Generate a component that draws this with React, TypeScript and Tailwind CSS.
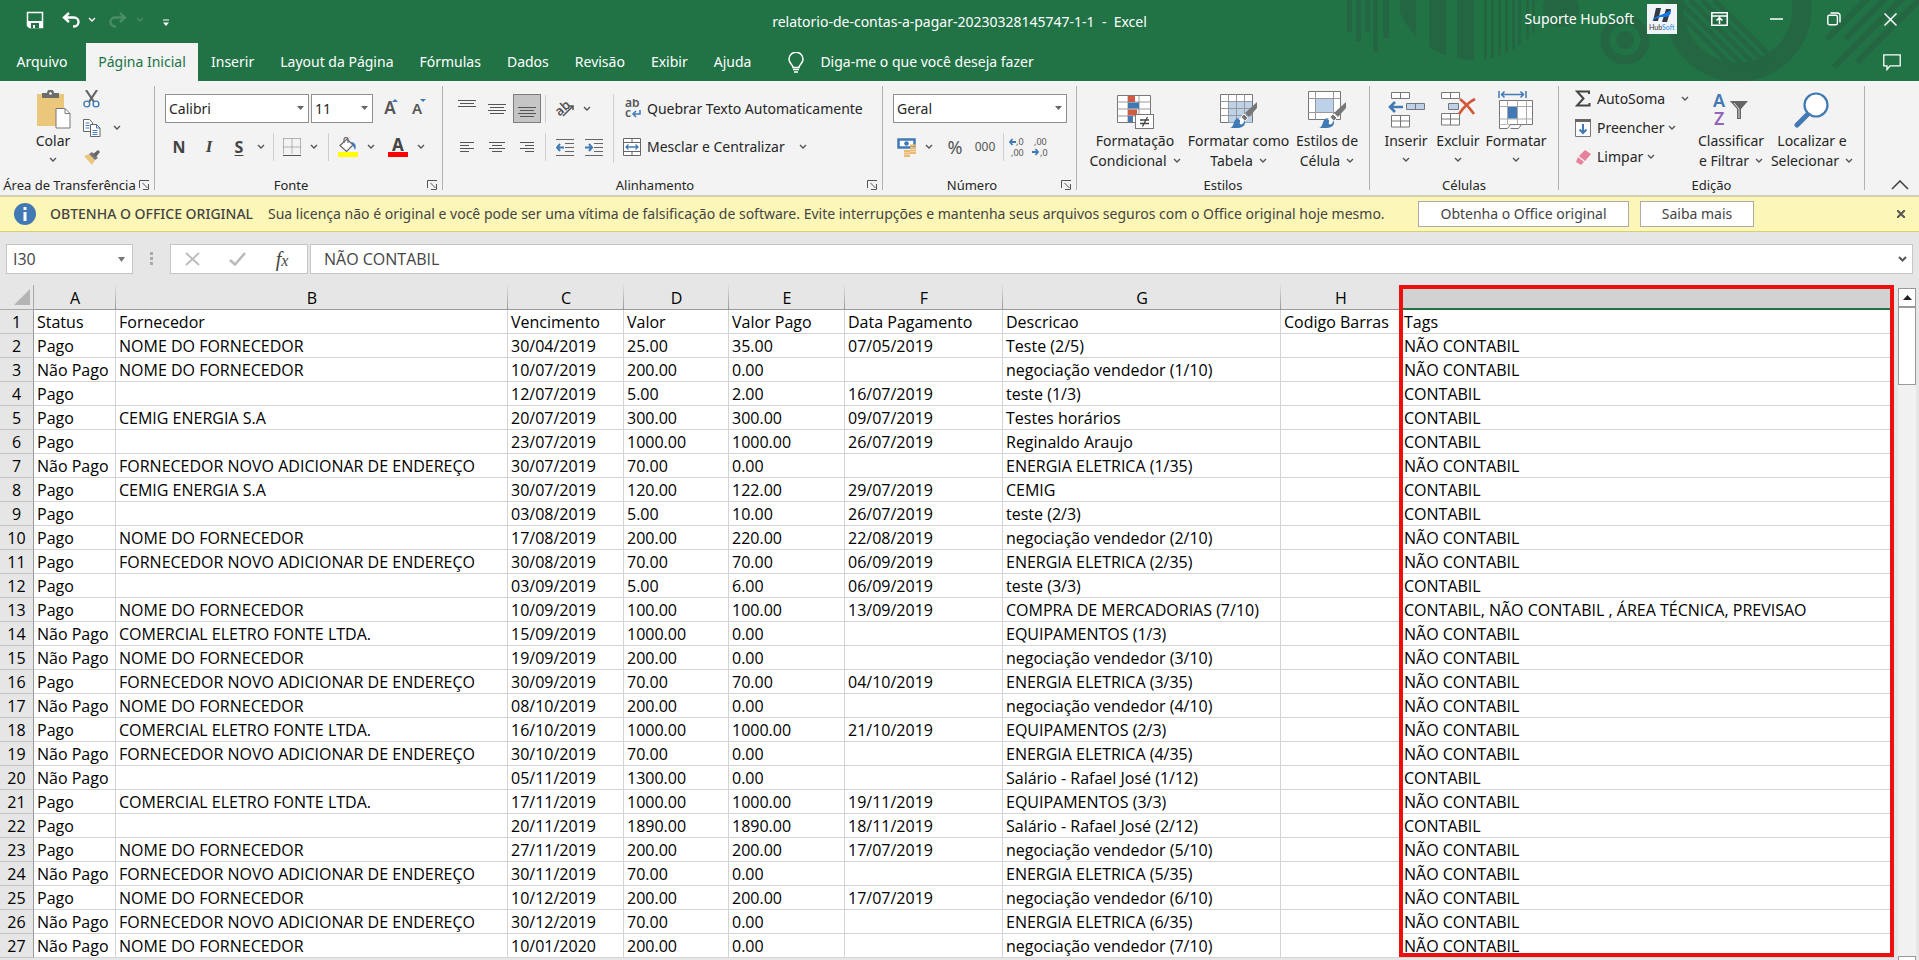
import React from 'react'

type IconProps = { w: number; h: number; children: React.ReactNode; className?: string }

function Icon({ w, h, children, className }: IconProps) {
  return (
    <svg width={w} height={h} viewBox={`0 0 ${w} ${h}`} fill="none" className={className} aria-hidden="true">
      {children}
    </svg>
  )
}

function Chevron({ className = 'text-[#555]' }: { className?: string }) {
  return (
    <Icon w={8} h={6} className={`inline-block shrink-0 ${className}`}>
      <path d="M1 1l3 3 3-3" stroke="currentColor" strokeWidth="1.4" />
    </Icon>
  )
}

function DropButton({ label, className = '' }: { label: string; className?: string }) {
  return (
    <button aria-label={label} className={`flex h-7 w-4 shrink-0 items-center justify-center ${className}`}>
      <Chevron />
    </button>
  )
}

function Tool({ label, className = 'w-[30px]', children }: { label: string; className?: string; children: React.ReactNode }) {
  return (
    <button aria-label={label} className={`flex h-7 shrink-0 items-center justify-center ${className}`}>
      {children}
    </button>
  )
}

function Sep({ className = '' }: { className?: string }) {
  return <div className={`h-7 w-px shrink-0 bg-[#d0d0d0] ${className}`} />
}

// horizontal strokes of an alignment icon: [x, width] per line
function Lines({ rows, top = 1, h = 18 }: { rows: number[][]; top?: number; h?: number }) {
  return (
    <Icon w={20} h={h}>
      {rows.map(([x, w], i) => (
        <rect key={i} x={x} y={top + i * 3} width={w} height="1" fill="#555" />
      ))}
    </Icon>
  )
}

function Group({ name, width, launcher, children }: { name: string; width: string; launcher?: boolean; children: React.ReactNode }) {
  return (
    <section aria-label={name} className={`flex shrink-0 ${width}`}>
      <div className="flex min-w-0 flex-1 flex-col">
        <div className="h-[94px]">{children}</div>
        <div className="flex h-5 items-center">
          <span className="flex-1 text-center text-[13px] leading-5 whitespace-nowrap">{name}</span>
          {launcher && (
            <button aria-label={`Opções de ${name}`} className="mr-1 shrink-0">
              <Icon w={11} h={10}>
                <path d="M.5 8V.5H10M3.500 3l5 5M9.500 4v5.500H4" stroke="#555" />
              </Icon>
            </button>
          )}
        </div>
      </div>
      <div className="mt-[5px] h-[104px] w-px bg-[#b1b1b1]" />
    </section>
  )
}

function Select({ label, value, className }: { label: string; value: string; className: string }) {
  return (
    <div className={`relative h-[29px] ${className}`}>
      <select aria-label={label} className="h-full w-full appearance-none border border-[#8f8f8f] bg-white pl-[3px] text-sm">
        <option>{value}</option>
      </select>
      <svg width="7" height="4" className="pointer-events-none absolute top-3 right-[5px]" aria-hidden="true">
        <path d="M0 0h7L3.500 4z" fill="#666" />
      </svg>
    </div>
  )
}

function BigButton({ lines, width, children }: { lines: string[]; width: string; children: React.ReactNode }) {
  return (
    <button className={`flex shrink-0 flex-col items-center whitespace-nowrap ${width}`}>
      <span className="flex h-[42px] items-center justify-center">{children}</span>
      <span className="leading-5">{lines[0]}</span>
      <span className="flex items-center gap-[6px] leading-5">
        {lines[1]}
        <Chevron className={lines[1] ? 'text-[#555]' : 'mt-[6px] text-[#555]'} />
      </span>
    </button>
  )
}

function TitlePattern() {
  return (
    <svg width="580" height="81" viewBox="1339 0 580 81" className="pointer-events-none absolute top-0 right-0" aria-hidden="true">
      <defs>
        <clipPath id="disc"><circle cx="1473" cy="-20" r="80" /></clipPath>
        <clipPath id="ring"><circle cx="1738" cy="8" r="64" /></clipPath>
      </defs>
      <g fill="#236641">
        <rect x="1347" y="0" width="5" height="32" />
        <rect x="1356" y="0" width="5" height="41" />
        <rect x="1365" y="0" width="5" height="32" />
        <rect x="1373" y="0" width="5" height="52" />
        <rect x="1383" y="0" width="6" height="38" />
        <g clipPath="url(#disc)">
          <rect x="1400" y="0" width="16" height="80" />
          <rect x="1429" y="0" width="17" height="80" />
          <rect x="1457" y="0" width="17" height="80" />
          {[1484, 1491, 1498, 1505, 1512, 1518, 1526, 1532].map((x) => (
            <rect key={x} x={x} y="0" width="3" height="80" />
          ))}
        </g>
        <circle cx="1561" cy="9" r="18" />
        <circle cx="1625" cy="40" r="9" />
      </g>
      <g stroke="#236641" fill="none">
        <circle cx="1625" cy="40" r="20" strokeWidth="9" />
        <circle cx="1738" cy="8" r="64" strokeWidth="19" />
        <g clipPath="url(#ring)" strokeWidth="5">
          <path d="M1666 0l75 75M1678 0l75 75M1690 0l75 75M1702 0l75 75M1714 0l70 70" />
        </g>
        <path d="M1827 39l42-42M1845 39l42-42M1834 67l70-70M1857 62l65-65" strokeWidth="6" />
      </g>
    </svg>
  )
}

function TitleBar() {
  return (
    <div className="relative grid h-[43px] grid-cols-[1fr_auto_1fr] text-white">
      <div className="flex h-10 items-center pl-[26px]">
        <button aria-label="Salvar" className="w-9">
          <Icon w={18} h={18}>
            <path d="M1.500 1.500h15v15h-13l-2-2z" stroke="#fff" strokeWidth="1.500" />
            <path d="M1 10h16v7H4l-3-2z" fill="#fff" />
            <path d="M5 12h8v5H9v-3H7v3H5z" fill="#217346" />
          </Icon>
        </button>
        <button aria-label="Desfazer" className="w-[26px]">
          <Icon w={19} h={16}>
            <path d="M7 1L2 5.500l5 4.500M2.500 5.500H12a4.500 4.500 0 0 1 0 9h-1" stroke="#fff" strokeWidth="2.400" />
          </Icon>
        </button>
        <Chevron className="text-white" />
        <button aria-label="Refazer" className="ml-3 w-[28px]" disabled>
          <Icon w={19} h={16}>
            <path d="M12 1l5 4.500-5 4.500M16.500 5.500H7a4.500 4.500 0 0 0 0 9h1" stroke="#4a8c67" strokeWidth="2.400" />
          </Icon>
        </button>
        <Chevron className="text-[#4a8c67]" />
        <button aria-label="Personalizar acesso rápido" className="mt-1 ml-[19px]">
          <Icon w={6} h={7}>
            <path d="M0 1h6" stroke="#fff" />
            <path d="M0 3.500h6L3 7z" fill="#fff" />
          </Icon>
        </button>
      </div>
      <h1 className="text-sm leading-[43px] whitespace-pre">relatorio-de-contas-a-pagar-20230328145747-1-1  -  Excel</h1>
      <div className="flex h-[38px] items-center justify-end">
        <span className="mr-[13px] text-sm">Suporte HubSoft</span>
        <svg width="30" height="30" viewBox="0 0 30 30" className="mr-[14px]" aria-hidden="true">
          <rect width="30" height="30" fill="#f1f4f6" />
          <path d="M9 4h5l-3 13H6zM19 5h5l-4 13h-5z" fill="#333a45" />
          <path d="M5 17C8 11 15 12 24 6c0 6-3 7-8 7-4 0-8 1-11 4z" fill="#1478e8" />
          <text x="2" y="26" fontSize="7" fill="#333" fontFamily="Lato">Hub</text>
          <text x="15" y="26" fontSize="7" fill="#2a86e8" fontFamily="Lato">Soft</text>
        </svg>
        <button aria-label="Opções de exibição da faixa" className="flex w-[57px] justify-center">
          <Icon w={17} h={14}>
            <path d="M.8.8h15.400v12.400H.8zM1 4h15M8.500 12V6M5.500 8.500l3-3 3 3" stroke="#fff" strokeWidth="1.500" />
          </Icon>
        </button>
        <button aria-label="Minimizar" className="flex w-[57px] justify-center">
          <Icon w={13} h={2}><path d="M0 1h13" stroke="#fff" strokeWidth="1.500" /></Icon>
        </button>
        <button aria-label="Restaurar" className="flex w-[57px] justify-center">
          <Icon w={14} h={14}>
            <rect x=".8" y="3.200" width="9.600" height="9.600" rx="1.500" stroke="#fff" strokeWidth="1.400" />
            <path d="M3.500 1h7A2.500 2.500 0 0 1 13 3.500v7" stroke="#fff" strokeWidth="1.400" />
          </Icon>
        </button>
        <button aria-label="Fechar" className="flex w-[57px] justify-center">
          <Icon w={13} h={13}><path d="M.5.5l12 12M12.500.5l-12 12" stroke="#fff" strokeWidth="1.500" /></Icon>
        </button>
      </div>
    </div>
  )
}

const tabs = ['Inserir', 'Layout da Página', 'Fórmulas', 'Dados', 'Revisão', 'Exibir', 'Ajuda']

function Tabs() {
  return (
    <nav className="relative flex h-[38px] text-sm text-white">
      <button className="w-[86px] pr-[2px]">Arquivo</button>
      <button className="w-[112px] bg-[#f3f3f3] text-[#217346]">Página Inicial</button>
      {tabs.map((t) => (
        <button key={t} className="px-[13px]">{t}</button>
      ))}
      <button className="ml-6 flex items-center gap-4">
        <Icon w={16} h={21}>
          <path d="M5 15.500c0-3-4-4-4-8.300a7 7 0 0 1 14 0c0 4.300-4 5.300-4 8.300zM5 17.500h6M6 20h4" stroke="#fff" strokeWidth="1.500" />
        </Icon>
        Diga-me o que você deseja fazer
      </button>
      <button aria-label="Comentários" className="mr-[18px] ml-auto">
        <Icon w={18} h={17}>
          <path d="M.8.800h16.400v11H7l-3 3.700v-3.700H.8z" stroke="#fff" strokeWidth="1.300" />
        </Icon>
      </button>
    </nav>
  )
}

function PaintBrush({ x, y }: { x: number; y: number }) {
  return (
    <g transform={`translate(${x} ${y})`}>
      <path d="M27 0v6l-8 9-4-4z" fill="#777" />
      <path d="M14 12l4 4-3 3-4-4z" fill="#777" stroke="#f3f3f3" />
      <path d="M0 26c4-1 3-6 6-9a6 6 0 0 1 8 1c3 4-1 8-6 8z" fill="#4179b5" />
      <path d="M8 17c2-2 6-1 6 2s-3 4-4 3 2-4-2-5z" fill="#fff" />
    </g>
  )
}

function Clipboard() {
  return (
    <Group name="Área de Transferência" width="w-[155px]" launcher>
      <div className="flex">
        <button className="ml-[33px] flex w-10 flex-col items-center pt-[9px]">
          <Icon w={36} h={39}>
            <rect x="2" y="4" width="27" height="32" fill="#ebc77c" />
            <path d="M7 8V3h5a3.500 3.500 0 0 1 7 0h5v5z" fill="#6d6d6d" />
            <circle cx="15.500" cy="3.500" r="1.300" fill="#fff" />
            <path d="M21 18.500h9l5 5v14.500H21z" fill="#fff" stroke="#777" />
            <path d="M30 18.500v5h5" stroke="#777" />
          </Icon>
          <span className="mt-[2px] leading-5">Colar</span>
          <Chevron className="mt-[6px] text-[#555]" />
        </button>
        <div className="mt-[3px] ml-[10px] flex flex-col">
          <button aria-label="Recortar" className="flex h-[29px] items-center">
            <Icon w={17} h={18}>
              <path d="M3 0l8 12M14 0L6 12" stroke="#666" strokeWidth="2.200" />
              <circle cx="3.800" cy="14" r="2.900" stroke="#4179b5" strokeWidth="1.400" />
              <circle cx="13" cy="14" r="2.900" stroke="#4179b5" strokeWidth="1.400" />
            </Icon>
          </button>
          <div className="flex h-[29px] items-center gap-3">
            <button aria-label="Copiar">
              <Icon w={18} h={18}>
                <path d="M.5.5h6l3 3v9h-9z" fill="#fff" stroke="#666" />
                <path d="M2.500 4h4M2.500 6.500h4M2.500 9h4" stroke="#4179b5" />
                <path d="M7.500 5.500h6l3.500 3.500v8.500H7.500z" fill="#fff" stroke="#666" />
                <path d="M13.500 5.500V9H17M9.500 11.500h5M9.500 13.500h5M9.500 15.500h5" stroke="#4179b5" />
              </Icon>
            </button>
            <Chevron />
          </div>
          <button aria-label="Pincel de formatação" className="flex h-[29px] items-center">
            <Icon w={18} h={16}>
              <path d="M1 7l5-2 6 6-3 5z" fill="#ebc77c" />
              <path d="M6 5l3-2 6 6-3 2z" fill="#777" />
              <path d="M10 5l5-4 2 2-4 5z" fill="#666" />
            </Icon>
          </button>
        </div>
      </div>
    </Group>
  )
}

function FontGroup() {
  return (
    <Group name="Fonte" width="w-[288px]" launcher>
      <div className="pt-[13px] pl-[10px]">
        <div className="flex items-center">
          <Select label="Fonte" value="Calibri" className="w-36" />
          <Select label="Tamanho" value="11" className="ml-[2px] w-[62px]" />
          <Tool label="Aumentar fonte" className="ml-1 w-7">
            <span className="text-[17px] font-semibold text-[#555]">A</span>
            <svg width="6" height="3" className="mb-4 -ml-1"><path d="M0 3h6L3 0z" fill="#4179b5" /></svg>
          </Tool>
          <Tool label="Diminuir fonte" className="w-7">
            <span className="text-[15px] font-semibold text-[#555]">A</span>
            <svg width="6" height="3" className="mb-4 -ml-[2px]"><path d="M0 0h6L3 3z" fill="#4179b5" /></svg>
          </Tool>
        </div>
        <div className="mt-[10px] flex items-center text-base text-[#444]">
          <Tool label="Negrito" className="w-7"><b>N</b></Tool>
          <Tool label="Itálico" className="w-8"><i className="font-['Liberation_Serif'] text-[17px] font-bold">I</i></Tool>
          <Tool label="Sublinhado" className="w-[28px]"><b className="underline underline-offset-2">S</b></Tool>
          <DropButton label="Tipos de sublinhado" />
          <Sep className="ml-1" />
          <Tool label="Bordas" className="ml-1 w-7">
            <Icon w={18} h={18}>
              <path d="M.5.5h17M.5.5v16M17.500.5v16M9 .5v16M.5 9h17" stroke="#777" strokeDasharray="1 1" />
              <path d="M0 17.500h18" stroke="#555" />
            </Icon>
          </Tool>
          <DropButton label="Opções de borda" />
          <Sep className="ml-[6px]" />
          <Tool label="Cor de preenchimento" className="ml-1 w-[30px]">
            <Icon w={22} h={20}>
              <path d="M3 8.500L10 2l6 6-6.500 6.500z" fill="#fff" stroke="#666" strokeWidth="1.200" />
              <path d="M7 6V2.500a2 2 0 0 1 4 0V6" stroke="#666" strokeWidth="1.200" />
              <path d="M14 5c4 0 6 4 4 8-1-3-3-5-4-8z" fill="#4179b5" />
              <rect x="1" y="15" width="20" height="5" fill="#ff0" />
            </Icon>
          </Tool>
          <DropButton label="Cores de preenchimento" />
          <Tool label="Cor da fonte" className="ml-1 w-[30px] flex-col">
            <b className="text-[17px] leading-[15px]">A</b>
            <span className="h-[5px] w-5 bg-[#f00]" />
          </Tool>
          <DropButton label="Cores da fonte" />
        </div>
      </div>
    </Group>
  )
}

const left = [[3, 14], [3, 9], [3, 14], [3, 9]]
const center = [[2, 16], [5, 10], [2, 16], [5, 10]]
const right = [[3, 14], [8, 9], [3, 14], [8, 9]]

function IndentIcon({ dir }: { dir: 'left' | 'right' }) {
  return (
    <Icon w={18} h={17}>
      <path d="M0 .5h18M9 4.500h9M9 8.500h9M9 12.500h9M0 16.500h18" stroke="#666" />
      <path d={dir === 'left' ? 'M8 8.500H1M4 5L1 8.500 4 12' : 'M0 8.500h7M4 5l3 3.500L4 12'} stroke="#4179b5" strokeWidth="2" />
    </Icon>
  )
}

function Alignment() {
  return (
    <Group name="Alinhamento" width="w-[440px]" launcher>
      <div className="flex pt-[13px]">
        <div className="ml-[9px] flex flex-col">
          <div className="flex h-[29px] items-center">
            <Tool label="Alinhar em cima"><Lines rows={[[1, 18], [3, 14], [1, 18]]} h={18} top={0} /></Tool>
            <Tool label="Alinhar no meio"><Lines rows={[[1, 18], [3, 14], [1, 18], [3, 14]]} top={4} /></Tool>
            <button aria-label="Alinhar embaixo" className="ml-px flex h-[29px] w-7 items-center justify-center border border-[#7d7d7d] bg-[#c5c5c5]">
              <Lines rows={[[1, 18], [3, 14], [1, 18], [3, 14]]} top={8} h={20} />
            </button>
            <Sep className="ml-1" />
            <Tool label="Orientação" className="ml-1 w-[29px]">
              <Icon w={20} h={19}>
                <text x="0" y="14" transform="rotate(-42 7 10)" fontSize="13" fontWeight="600" fill="#555">ab</text>
                <path d="M8 17l10-10M14 7h4v4" stroke="#555" strokeWidth="1.500" />
              </Icon>
            </Tool>
            <DropButton label="Opções de orientação" />
          </div>
          <div className="mt-[10px] flex items-center">
            <Tool label="Alinhar à esquerda"><Lines rows={left} top={4} /></Tool>
            <Tool label="Centralizar"><Lines rows={center} top={4} /></Tool>
            <Tool label="Alinhar à direita"><Lines rows={right} top={4} /></Tool>
            <Sep className="ml-[3px]" />
            <Tool label="Diminuir recuo" className="ml-1 w-[29px]"><IndentIcon dir="left" /></Tool>
            <Tool label="Aumentar recuo"><IndentIcon dir="right" /></Tool>
          </div>
        </div>
        <div className="ml-1 h-[69px] w-px bg-[#d0d0d0]" />
        <div className="ml-[9px] flex flex-col">
          <button className="flex h-[29px] items-center gap-[6px] whitespace-nowrap">
            <Icon w={18} h={20}>
              <text x="2" y="8" fontSize="12" fontWeight="600" fill="#555">ab</text>
              <text x="2" y="18" fontSize="12" fontWeight="600" fill="#555">c</text>
              <path d="M17 11v4h-6M13 12l-3 3 3 3" stroke="#4179b5" strokeWidth="1.500" />
            </Icon>
            Quebrar Texto Automaticamente
          </button>
          <div className="mt-[10px] flex items-center">
            <button className="flex h-7 items-center gap-[6px] whitespace-nowrap">
              <Icon w={18} h={18}>
                <path d="M.5.500h17v17H.5zM.5 4.500h17M.5 13.500h17M9 .5v4M9 13.500v4" fill="#fff" stroke="#666" />
                <path d="M3 9h12M5.500 6.500L3 9l2.500 2.500M12.500 6.500L15 9l-2.500 2.500" stroke="#4179b5" strokeWidth="1.300" />
              </Icon>
              Mesclar e Centralizar
            </button>
            <DropButton label="Opções de mesclagem" className="ml-[10px]" />
          </div>
        </div>
      </div>
    </Group>
  )
}

function NumberGroup() {
  return (
    <Group name="Número" width="w-[194px]" launcher>
      <div className="pt-[13px] pl-[10px]">
        <Select label="Formato de número" value="Geral" className="w-[174px]" />
        <div className="mt-[10px] flex items-center text-[#555]">
          <Tool label="Formato de moeda" className="w-7">
            <Icon w={20} h={19}>
              <path d="M1.500 1.500h16v8h-16z" stroke="#4179b5" strokeWidth="2.500" fill="#fff" />
              <circle cx="9.500" cy="5.500" r="2.300" fill="#4179b5" />
              <path d="M13 7.500h6M13 10h6M13 12.500h6M13 15h6M7 13h6M7 15.500h6M7 18h6" stroke="#ebb970" strokeWidth="1.800" />
            </Icon>
          </Tool>
          <DropButton label="Moedas" />
          <Tool label="Porcentagem" className="w-9 text-lg">%</Tool>
          <Tool label="Separador de milhares" className="w-6 text-xs">000</Tool>
          <Sep className="ml-[6px]" />
          <Tool label="Aumentar casas decimais" className="ml-1">
            <Icon w={18} h={20}>
              <path d="M8 5H2M4.500 2L2 5l2.500 3" stroke="#4179b5" strokeWidth="1.800" />
              <text x="8" y="8" fontSize="9" fill="#555">,0</text>
              <text x="3" y="19" fontSize="9" fill="#555">,00</text>
            </Icon>
          </Tool>
          <Tool label="Diminuir casas decimais" className="w-7">
            <Icon w={18} h={20}>
              <text x="3" y="8" fontSize="9" fill="#555">,00</text>
              <path d="M1 15h6M4.500 12L7 15l-2.500 3" stroke="#4179b5" strokeWidth="1.800" />
              <text x="9" y="19" fontSize="9" fill="#555">,0</text>
            </Icon>
          </Tool>
        </div>
      </div>
    </Group>
  )
}

function Styles() {
  return (
    <Group name="Estilos" width="w-[293px]">
      <div className="flex pt-[8px] pl-2">
        <BigButton lines={['Formatação', 'Condicional']} width="w-[100px]">
          <Icon w={38} h={38}>
            <path d="M1.500 4.500h33v27h-33z" fill="#fff" stroke="#777" />
            <path d="M1.500 11h33M1.500 18h33M1.500 25h33M12 4.500v27M23 4.500v27" stroke="#999" />
            <path d="M12 5h7v6h-7zM12 18.500h9v6h-9z" fill="#cf5b41" />
            <path d="M12 11.500h11v6H12zM12 25h5v6h-5z" fill="#4179b5" />
            <rect x="19.500" y="23.500" width="18" height="14" fill="#fff" stroke="#777" />
            <path d="M24 29h9M24 32.500h9M31.500 26l-5 9.500" stroke="#444" strokeWidth="1.300" />
          </Icon>
        </BigButton>
        <BigButton lines={['Formatar como', 'Tabela']} width="w-[107px]">
          <Icon w={38} h={38}>
            <path d="M.5 3.500h32v28H.5z" fill="#fff" stroke="#777" />
            <path d="M9 10.500h23v21H9z" fill="#bdd1e8" />
            <path d="M.5 10.500h32M.5 17.500h32M.5 24.500h32M8.500 3.500v28M16.500 3.500v28M24.500 3.500v28" stroke="#999" />
            <PaintBrush x={10} y={11} />
          </Icon>
        </BigButton>
        <BigButton lines={['Estilos de', 'Célula']} width="w-[70px]">
          <Icon w={38} h={38}>
            <path d="M.5.500h32v28H.5z" fill="#fff" stroke="#777" />
            <path d="M7.500 7.500h18v14h-18z" fill="#bdd1e8" />
            <path d="M.5 7.500h32M.5 21.500h32M7.500.5v28M25.500.5v28" stroke="#999" />
            <PaintBrush x={11} y={11} />
          </Icon>
        </BigButton>
      </div>
    </Group>
  )
}

function Cells() {
  return (
    <Group name="Células" width="w-[189px]">
      <div className="flex pt-[8px] pl-[10px]">
        <BigButton lines={['Inserir', '']} width="w-[52px]">
          <Icon w={37} h={38}>
            <path d="M3.500 1.500h18v6h-18zM12.500 1.500v6M3.500 24.500h18v11.500h-18zM12.500 24.500v11.500M3.500 30h18" fill="#fff" stroke="#777" />
            <path d="M18.500 12.500h18v6h-18zM27.500 12.500v6" fill="#bdd1e8" stroke="#777" />
            <path d="M15 16H2M7 11l-5 5 5 5" stroke="#4179b5" strokeWidth="2.600" />
          </Icon>
        </BigButton>
        <BigButton lines={['Excluir', '']} width="w-[52px]">
          <Icon w={36} h={38}>
            <path d="M1.500 1.500h18v6h-18zM10.500 1.500v6M1.500 22.500h18v11.500h-18zM10.500 22.500v11.500M1.500 28h18" fill="#fff" stroke="#777" />
            <path d="M8.500 12.500h10v6h-10z" fill="#bdd1e8" stroke="#777" />
            <path d="M20 8c5 4 10 9 14 15M35 8c-6 3-12 9-16 15" stroke="#d2593c" strokeWidth="2.600" />
          </Icon>
        </BigButton>
        <BigButton lines={['Formatar', '']} width="w-16">
          <Icon w={36} h={39}>
            <path d="M1 0v7M28 0v7M3 3.500h23M6.500.5L3.500 3.500l3 3M22.500.5l3 3-3 3" stroke="#4179b5" strokeWidth="1.500" />
            <path d="M1.500 9.500h33v24h-33z" fill="#fff" stroke="#777" />
            <path d="M1.500 15.500h33M1.500 28h33M9.500 9.500v24M19.500 9.500v24M28.500 9.500v24" stroke="#aaa" />
            <path d="M10 16h9v11.500h-9z" fill="#4179b5" />
            <path d="M1.500 33.500v4h8l3-4M12.500 37.500h8l3-4" fill="#fff" stroke="#777" />
          </Icon>
        </BigButton>
      </div>
    </Group>
  )
}

function Editing() {
  return (
    <Group name="Edição" width="w-[306px]">
      <div className="flex">
        <div className="flex w-[134px] shrink-0 flex-col pt-[3px] pl-4">
          <button className="flex h-[29px] items-center">
            <Icon w={16} h={17} className="mr-[6px]">
              <path d="M14 4V1.500H2L8.500 8.500 2 15.500h12.500V13" stroke="#444" strokeWidth="2" />
            </Icon>
            AutoSoma
            <Chevron className="ml-4 text-[#555]" />
          </button>
          <button className="flex h-[29px] items-center">
            <Icon w={16} h={18} className="mr-[6px]">
              <path d="M.5.500h15v17H.5z" fill="#fff" stroke="#777" />
              <path d="M0 1.500h16" stroke="#666" strokeWidth="3" />
              <path d="M8 5v9M4.500 10.500L8 14l3.500-3.500" stroke="#4179b5" strokeWidth="2" />
            </Icon>
            Preencher
            <Chevron className="ml-1 text-[#555]" />
          </button>
          <button className="flex h-[29px] items-center">
            <Icon w={16} h={16} className="mr-[6px]">
              <path d="M10 1l6 4-6 7-6-5z" fill="#e8819a" />
              <path d="M3 8l6 5-3 3-5-3z" fill="#e8819a" />
            </Icon>
            Limpar
            <Chevron className="ml-1 text-[#555]" />
          </button>
        </div>
        <div className="flex pt-[8px]">
          <BigButton lines={['Classificar', 'e Filtrar']} width="w-[76px]">
            <Icon w={36} h={34}>
              <text x="0" y="14" fontSize="18" fontWeight="600" fill="#4179b5">A</text>
              <text x="1" y="32" fontSize="18" fontWeight="600" fill="#9363b5">Z</text>
              <path d="M17 8h18l-7 8v10h-4V16z" fill="#666" />
              <path d="M21 10l5 6v9" stroke="#ddd" />
            </Icon>
          </BigButton>
          <BigButton lines={['Localizar e', 'Selecionar']} width="w-[86px]">
            <Icon w={36} h={38}>
              <path d="M13 24L3 34" stroke="#4179b5" strokeWidth="5" strokeLinecap="round" />
              <circle cx="22" cy="14" r="11.500" fill="#fff" stroke="#4179b5" strokeWidth="2.200" />
            </Icon>
          </BigButton>
        </div>
      </div>
    </Group>
  )
}

function Notice() {
  return (
    <div className="flex h-[37px] items-center border-t-2 border-b border-t-[#d3d1b0] border-b-[#d6cf7a] bg-[#fcf7b6] pl-[14px] text-sm whitespace-nowrap text-[#444]">
      <Icon w={22} h={22} className="shrink-0">
        <circle cx="11" cy="11" r="11" fill="#4179b5" />
        <path d="M11 9v9M11 4v3" stroke="#fff" strokeWidth="3" />
      </Icon>
      <span className="ml-[14px] w-[218px] shrink-0 font-medium">OBTENHA O OFFICE ORIGINAL</span>
      <span className="w-[1150px] shrink-0">Sua licença não é original e você pode ser uma vítima de falsificação de software. Evite interrupções e mantenha seus arquivos seguros com o Office original hoje mesmo.</span>
      <button className="h-[26px] w-[211px] shrink-0 border border-[#ababab] bg-white">Obtenha o Office original</button>
      <button className="ml-[11px] h-[26px] w-[114px] shrink-0 border border-[#ababab] bg-white">Saiba mais</button>
      <button aria-label="Fechar aviso" className="mr-[14px] ml-auto">
        <Icon w={8} h={8}><path d="M0 0l8 8M8 0L0 8" stroke="#555" strokeWidth="2" /></Icon>
      </button>
    </div>
  )
}

function FormulaBar() {
  return (
    <div className="flex h-[53px] items-start bg-[#e6e6e6] pt-3 pr-[6px] pl-[6px] text-[#444]">
      <div className="relative">
        <input aria-label="Caixa de nome" defaultValue="I30" className="h-[30px] w-[127px] border border-[#c6c6c6] bg-white pl-[6px] font-['Open_Sans'] text-base" />
        <svg width="7" height="5" className="pointer-events-none absolute top-[13px] right-2" aria-hidden="true"><path d="M0 0h7L3.500 5z" fill="#777" /></svg>
      </div>
      <Icon w={3} h={13} className="mt-2 ml-[17px]"><path d="M0 1.500h3M0 6.500h3M0 11.500h3" stroke="#aaa" strokeWidth="3" /></Icon>
      <div className="ml-[17px] flex h-[30px] w-[138px] items-center border border-[#c6c6c6] bg-white">
        <Tool label="Cancelar" className="w-[42px]"><Icon w={15} h={14}><path d="M1 1l13 12M14 1L1 13" stroke="#bbb" strokeWidth="1.800" /></Icon></Tool>
        <Tool label="Inserir" className="w-[48px]"><Icon w={17} h={14}><path d="M1 8l5 4.500L16 1" stroke="#bbb" strokeWidth="2.600" /></Icon></Tool>
        <Tool label="Inserir função" className="w-[42px] font-['Liberation_Serif'] text-xl"><i>f<span className="text-base">x</span></i></Tool>
      </div>
      <div className="relative ml-[2px] flex-1">
        <input aria-label="Barra de fórmulas" defaultValue="NÃO CONTABIL" className="h-[30px] w-full border border-[#c6c6c6] bg-white pl-[13px] font-['Open_Sans'] text-base" />
        <svg width="9" height="6" className="pointer-events-none absolute top-3 right-[6px]" aria-hidden="true"><path d="M1 1l3.500 3.500L8 1" fill="none" stroke="#555" strokeWidth="2" /></svg>
      </div>
    </div>
  )
}

const F1 = 'NOME DO FORNECEDOR'
const F2 = 'FORNECEDOR NOVO ADICIONAR DE ENDEREÇO'
const F3 = 'COMERCIAL ELETRO FONTE LTDA.'
const F4 = 'CEMIG ENERGIA S.A'
const NC = 'NÃO CONTABIL'

const rows = [
  ['Status', 'Fornecedor', 'Vencimento', 'Valor', 'Valor Pago', 'Data Pagamento', 'Descricao', 'Codigo Barras', 'Tags'],
  ['Pago', F1, '30/04/2019', '25.00', '35.00', '07/05/2019', 'Teste (2/5)', '', NC],
  ['Não Pago', F1, '10/07/2019', '200.00', '0.00', '', 'negociação vendedor (1/10)', '', NC],
  ['Pago', '', '12/07/2019', '5.00', '2.00', '16/07/2019', 'teste (1/3)', '', 'CONTABIL'],
  ['Pago', F4, '20/07/2019', '300.00', '300.00', '09/07/2019', 'Testes horários', '', 'CONTABIL'],
  ['Pago', '', '23/07/2019', '1000.00', '1000.00', '26/07/2019', 'Reginaldo Araujo', '', 'CONTABIL'],
  ['Não Pago', F2, '30/07/2019', '70.00', '0.00', '', 'ENERGIA ELETRICA (1/35)', '', NC],
  ['Pago', F4, '30/07/2019', '120.00', '122.00', '29/07/2019', 'CEMIG', '', 'CONTABIL'],
  ['Pago', '', '03/08/2019', '5.00', '10.00', '26/07/2019', 'teste (2/3)', '', 'CONTABIL'],
  ['Pago', F1, '17/08/2019', '200.00', '220.00', '22/08/2019', 'negociação vendedor (2/10)', '', NC],
  ['Pago', F2, '30/08/2019', '70.00', '70.00', '06/09/2019', 'ENERGIA ELETRICA (2/35)', '', NC],
  ['Pago', '', '03/09/2019', '5.00', '6.00', '06/09/2019', 'teste (3/3)', '', 'CONTABIL'],
  ['Pago', F1, '10/09/2019', '100.00', '100.00', '13/09/2019', 'COMPRA DE MERCADORIAS (7/10)', '', 'CONTABIL, NÃO CONTABIL , ÁREA TÉCNICA, PREVISAO'],
  ['Não Pago', F3, '15/09/2019', '1000.00', '0.00', '', 'EQUIPAMENTOS (1/3)', '', NC],
  ['Não Pago', F1, '19/09/2019', '200.00', '0.00', '', 'negociação vendedor (3/10)', '', NC],
  ['Pago', F2, '30/09/2019', '70.00', '70.00', '04/10/2019', 'ENERGIA ELETRICA (3/35)', '', NC],
  ['Não Pago', F1, '08/10/2019', '200.00', '0.00', '', 'negociação vendedor (4/10)', '', NC],
  ['Pago', F3, '16/10/2019', '1000.00', '1000.00', '21/10/2019', 'EQUIPAMENTOS (2/3)', '', NC],
  ['Não Pago', F2, '30/10/2019', '70.00', '0.00', '', 'ENERGIA ELETRICA (4/35)', '', NC],
  ['Não Pago', '', '05/11/2019', '1300.00', '0.00', '', 'Salário - Rafael José (1/12)', '', 'CONTABIL'],
  ['Pago', F3, '17/11/2019', '1000.00', '1000.00', '19/11/2019', 'EQUIPAMENTOS (3/3)', '', NC],
  ['Pago', '', '20/11/2019', '1890.00', '1890.00', '18/11/2019', 'Salário - Rafael José (2/12)', '', 'CONTABIL'],
  ['Pago', F1, '27/11/2019', '200.00', '200.00', '17/07/2019', 'negociação vendedor (5/10)', '', NC],
  ['Não Pago', F2, '30/11/2019', '70.00', '0.00', '', 'ENERGIA ELETRICA (5/35)', '', NC],
  ['Pago', F1, '10/12/2019', '200.00', '200.00', '17/07/2019', 'negociação vendedor (6/10)', '', NC],
  ['Não Pago', F2, '30/12/2019', '70.00', '0.00', '', 'ENERGIA ELETRICA (6/35)', '', NC],
  ['Não Pago', F1, '10/01/2020', '200.00', '0.00', '', 'negociação vendedor (7/10)', '', NC],
]

function Sheet() {
  return (
    <div className="flex min-h-0 flex-1 bg-[#e6e6e6]">
      <div className="relative min-w-0 flex-1 overflow-hidden">
        <table className="w-full table-fixed border-separate border-spacing-0 bg-white font-['Open_Sans',sans-serif] text-base leading-[22px] text-black">
          <colgroup>
            <col className="w-[34px]" />
            <col className="w-[82px]" />
            <col className="w-[392px]" />
            <col className="w-[116px]" />
            <col className="w-[105px]" />
            <col className="w-[116px]" />
            <col className="w-[158px]" />
            <col className="w-[278px]" />
            <col className="w-[120px]" />
            <col />
          </colgroup>
          <thead>
            <tr className="h-[25px]">
              <th className="border-r border-b border-[#ababab] bg-[#e6e6e6] p-0">
                <Icon w={16} h={16} className="ml-[14px]"><path d="M16 0v16H0z" fill="#b4b4b4" /></Icon>
              </th>
              {'ABCDEFGH'.split('').map((c) => (
                <th key={c} className="border-b border-[#999] bg-[#e6e6e6] bg-[linear-gradient(#e0e0e0,#999)] bg-[length:1px_100%] bg-right bg-no-repeat p-0 pt-[2px] font-normal">{c}</th>
              ))}
              <th className="border-b-2 border-[#217346] bg-[#d2d2d2] p-0" />
            </tr>
          </thead>
          <tbody>
            {rows.map((r, i) => (
              <tr key={i} className="h-6">
                <th className="border-r border-b border-r-[#999] border-b-[#c4c4c4] bg-[#e6e6e6] p-0 font-normal">{i + 1}</th>
                {r.map((c, j) => (
                  <td key={j} className="border-r border-b border-[#d4d4d4] p-0 pl-[3px] whitespace-nowrap">{c}</td>
                ))}
              </tr>
            ))}
          </tbody>
        </table>
        {/* highlight over the Tags column */}
        <div className="pointer-events-none absolute top-0 right-0 bottom-[3px] left-[1399px] border-4 border-[#ee0f0f]" />
      </div>
      <div className="flex w-[25px] shrink-0 flex-col pt-[3px] pr-[3px] pl-1">
        <button aria-label="Rolar para cima" className="flex h-[19px] items-center justify-center border border-[#999] bg-white">
          <Icon w={9} h={5}><path d="M0 5h9L4.500 0z" fill="#222" /></Icon>
        </button>
        <div className="flex-1 bg-[#f1f1f1]">
          <div className="h-[78px] border border-[#999] bg-white" />
        </div>
        <div className="h-1 border border-b-0 border-[#999] bg-white" />
      </div>
    </div>
  )
}

export default function App() {
  return (
    <div className="flex h-screen flex-col overflow-hidden font-['Noto_Sans',sans-serif] text-sm text-[#262626]">
      <header className="relative bg-[#217346]">
        <TitlePattern />
        <TitleBar />
        <Tabs />
      </header>

      <div className="flex h-[114px] bg-[#f3f3f3]">
        <Clipboard />
        <FontGroup />
        <Alignment />
        <NumberGroup />
        <Styles />
        <Cells />
        <Editing />
        <button aria-label="Recolher faixa" className="mt-auto mr-[10px] mb-[5px] ml-auto">
          <Icon w={18} h={10}><path d="M1 9l8-8 8 8" stroke="#444" strokeWidth="1.600" /></Icon>
        </button>
      </div>

      <Notice />
      <FormulaBar />
      <Sheet />
    </div>
  )
}
